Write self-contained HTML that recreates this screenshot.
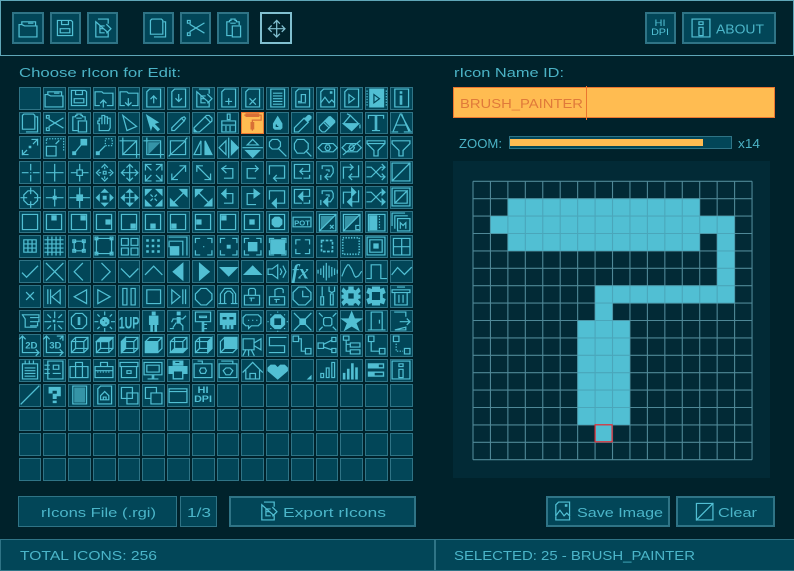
<!DOCTYPE html>
<html><head><meta charset="utf-8"><title>rIconPacker</title>
<style>
html,body{margin:0;padding:0;background:#00222b}
body{position:relative;width:794px;height:570px;overflow:hidden;font-family:"Liberation Sans",sans-serif}
div,b,a{position:absolute;box-sizing:border-box;display:block}
svg{color:#51bfd3;stroke:currentColor;fill:none;stroke-width:.9;stroke-linecap:square;stroke-linejoin:miter;overflow:visible}
svg.i{position:absolute;width:22px;height:22px}
.f{fill:currentColor}
.d{stroke:#024658;fill:#024658}
.t{stroke-linecap:butt;stroke-dasharray:1 1}
.o{fill:currentColor;stroke:none;opacity:.65}
svg text{fill:currentColor;stroke:none}
#g{left:18.5px;top:86.75px;display:grid;grid-template-columns:repeat(16,22.75px);grid-auto-rows:22.75px;gap:2px}
#g b{position:relative;background:#024658;border:1.4px solid #2f7486}
#g b svg.i{left:-1px;top:-1px}
#g b.s{background:#ffbc51;border-color:#eb7630}
#g b.s svg.i{color:#d86f36;width:20px;height:20px;left:1px;top:-1px;stroke-width:1}
.btn{background:#024658;border:2.4px solid #2f7486;top:12.3px;width:31.4px;height:31.4px}
.btn svg.i{left:2.3px;top:2.3px}
.box{background:#024658;border:1.4px solid #2f7486}
</style></head><body>

<div style="left:0;top:0;width:794px;height:55.5px;border:1.5px solid #5fa7b8;background:#00222b"></div>

<div class="btn" style="left:12.3px"><svg class="i" viewBox="-.5 -.5 16 16"><path d="M1 14V5H3V3H13V6M1 14H14V6H5L3 5M8 4H11"/></svg></div>
<div class="btn" style="left:49.6px"><svg class="i" viewBox="-.5 -.5 16 16"><path d="M2 2H12L13 3V13H2ZM5 2V5H10V2M4 8H11V11H4Z"/></svg></div>
<div class="btn" style="left:87px"><svg class="i" viewBox="-.5 -.5 16 16"><path d="M5 1H12V4M12 11V14H3V3ZM6 6H9M6 6V11H9M6 8H8M11 5L14 8L11 11"/></svg></div>
<div class="btn" style="left:142.7px"><svg class="i" viewBox="-.5 -.5 16 16"><path d="M3 1H10L11 2V12H2V2ZM12 3H13V14H5"/></svg></div>
<div class="btn" style="left:180px"><svg class="i" viewBox="-.5 -.5 16 16"><path d="M2 2H4V4H2ZM2 11H4V13H2ZM4 5L9 8L14 11M4 10L9 7L14 4"/></svg></div>
<div class="btn" style="left:217.3px"><svg class="i" viewBox="-.5 -.5 16 16"><path d="M3 3H5V2H6V1H9V2H10V3H12V5M3 3V13H6M7 6H13V14H7ZM6 4H9"/></svg></div>
<div class="btn" style="left:260.3px;background:#00222b;border-color:#81c0d0"><svg class="i" style="color:#81c0d0" viewBox="-.5 -.5 16 16"><path d="M8 2V14M2 8H14M6 4L8 2L10 4M6 12L8 14L10 12M4 6L2 8L4 10M12 6L14 8L12 10"/></svg></div>
<div class="btn" style="left:645px"><svg class="i" viewBox="-.5 -.5 16 16"><text x="3.5" y="6" font-size="6.8" textLength="8" lengthAdjust="spacingAndGlyphs" font-family="Liberation Sans">HI</text><text x="1" y="12.5" font-size="6.8" textLength="13" lengthAdjust="spacingAndGlyphs" font-family="Liberation Sans">DPI</text></svg></div>
<div class="btn" style="left:682.3px;width:93.4px"><svg class="i" style="left:6px" viewBox="-.5 -.5 16 16"><path d="M1 1H14V14H1ZM6 3H9V5H6ZM6 7H9V13H6Z"/></svg></div>

<div id="g">
<b></b>
<b><svg class="i" viewBox="-.5 -.5 16 16"><path d="M1 14V5H3V3H13V6M1 14H14V6H5L3 5M8 4H11"/></svg></b>
<b><svg class="i" viewBox="-.5 -.5 16 16"><path d="M2 2H12L13 3V13H2ZM5 2V5H10V2M4 8H11V11H4Z"/></svg></b>
<b><svg class="i" viewBox="-.5 -.5 16 16"><path d="M1 13V3H6L7 4H14V13H10M1 13H4M7 14V9M5 11L7 9L9 11"/></svg></b>
<b><svg class="i" viewBox="-.5 -.5 16 16"><path d="M1 13V3H6L7 4H14V13H10M1 13H4M7 8V13M5 11L7 13L9 11"/></svg></b>
<b><svg class="i" viewBox="-.5 -.5 16 16"><path d="M5 1H13V14H3V3ZM8 11V6M6 8L8 6L10 8"/></svg></b>
<b><svg class="i" viewBox="-.5 -.5 16 16"><path d="M5 1H13V14H3V3ZM8 5V10M6 8L8 10L10 8"/></svg></b>
<b><svg class="i" viewBox="-.5 -.5 16 16"><path d="M5 1H12V4M12 11V14H3V3ZM6 6H9M6 6V11H9M6 8H8M11 5L14 8L11 11"/></svg></b>
<b><svg class="i" viewBox="-.5 -.5 16 16"><path d="M5 1H13V14H3V3ZM8 8V12M6 10H10"/></svg></b>
<b><svg class="i" viewBox="-.5 -.5 16 16"><path d="M5 1H13V14H3V3ZM6 8L10 12M10 8L6 12"/></svg></b>
<b><svg class="i" viewBox="-.5 -.5 16 16"><path d="M3 1H13V14H3ZM5 4H11M5 6H11M5 8H11M5 10H11M5 12H11"/></svg></b>
<b><svg class="i" viewBox="-.5 -.5 16 16"><path d="M5 1H13V14H3V3ZM5 11H7V5H10V10M8 11H10M5 10H6"/></svg></b>
<b><svg class="i" viewBox="-.5 -.5 16 16"><path d="M5 1H13V14H3V3ZM10 3H11V4H10ZM3 11L6 7L9 11L11 9L13 11"/></svg></b>
<b><svg class="i" viewBox="-.5 -.5 16 16"><path d="M5 1H13V14H3V3ZM6 5V11L10 8Z"/></svg></b>
<b><svg class="i" viewBox="-.5 -.5 16 16"><path class="f" d="M3 1H13V14H3Z"/><path class="d" style="fill:none" d="M6 5V11L10 8Z"/><path d="M1 2V14M15 2V14" class="t"/></svg></b>
<b><svg class="i" viewBox="-.5 -.5 16 16"><path d="M3 1H13V14H3ZM7 3H8V4H7ZM7 6H8V12H7Z"/></svg></b>

<b><svg class="i" viewBox="-.5 -.5 16 16"><path d="M3 1H10L11 2V12H2V2ZM12 3H13V14H5"/></svg></b>
<b><svg class="i" viewBox="-.5 -.5 16 16"><path d="M2 2H4V4H2ZM2 11H4V13H2ZM4 5L9 8L14 11M4 10L9 7L14 4"/></svg></b>
<b><svg class="i" viewBox="-.5 -.5 16 16"><path d="M3 3H5V2H6V1H9V2H10V3H12V5M3 3V13H6M7 6H13V14H7ZM6 4H9"/></svg></b>
<b><svg class="i" viewBox="-.5 -.5 16 16"><path d="M4 13V8H3V6H4V4H6V2H8V3H10V4H12V11L11 13ZM6 4V8M8 3V8M10 4V8"/></svg></b>
<b><svg class="i" viewBox="-.5 -.5 16 16"><path d="M3 2L13 10L6 13Z"/></svg></b>
<b><svg class="i" viewBox="-.5 -.5 16 16"><path class="f" d="M3 2L11 7L8 8L12 12L11 13L7 9L6 12Z"/></svg></b>
<b><svg class="i" viewBox="-.5 -.5 16 16"><path d="M3 13V11L10 4L12 3L13 4L12 6L5 13ZM10 4L12 6"/></svg></b>
<b><svg class="i" viewBox="-.5 -.5 16 16"><path d="M1 14V11L10 2H12L14 4V6L5 14ZM9 3L13 7"/><path class="f" d="M1 14V12L3 14Z"/></svg></b>
<b><svg class="i" viewBox="-.5 -.5 16 16"><path d="M7 1H9V5H7ZM3 6H13V14H3ZM3 9H13M6 10V13M9 10V13"/></svg></b>
<b class="s"><svg class="i" viewBox="-.5 -.5 16 16"><path d="M2 1H12M1 2H14M2 3H12M14 3V6M7 6H14M7 7V14M6 8V13M8 8V13"/></svg></b>
<b><svg class="i" viewBox="-.5 -.5 16 16"><path class="f" d="M8 3L11 8V11L10 12H6L5 11V8Z"/><path class="d" d="M7 9V10H8"/></svg></b>
<b><svg class="i" viewBox="-.5 -.5 16 16"><path d="M2 14V11L9 4L12 7L5 14Z"/><path class="f" d="M10 4L12 2H13L14 3V4L12 6Z"/></svg></b>
<b><svg class="i" viewBox="-.5 -.5 16 16"><path d="M2 10L9 3H10L13 6V7L6 14H4L2 12ZM5 7L9 11"/><path class="f" d="M6 6L9 3H10L13 6V7L10 10Z"/></svg></b>
<b><svg class="i" viewBox="-.5 -.5 16 16"><path d="M7 2L13 8L8 13L2 8ZM7 2L5 1M14 9V11"/><path class="f" d="M2 8H13L8 13Z"/></svg></b>
<b><svg class="i" viewBox="-.5 -.5 16 16"><path d="M2 2H13V4M2 2V4M7 2V13M8 2V13M5 13H10"/></svg></b>
<b><svg class="i" viewBox="-.5 -.5 16 16"><path d="M7 1L2 13M7 1H8L13 13M8 2L14 13M1 14H5M10 14H15M4 9H11"/></svg></b>

<b><svg class="i" viewBox="-.5 -.5 16 16"><path d="M9 2H13V6M13 2L10 5M2 13V10M2 13H6M2 13L5 10"/><path class="f" d="M7 7H8V8H7Z"/></svg></b>
<b><svg class="i" viewBox="-.5 -.5 16 16"><path class="t" d="M2 1.5H14.5V11M2 2V6"/><path d="M2 7H9V14H2ZM9 5L11 3"/></svg></b>
<b><svg class="i" viewBox="-.5 -.5 16 16"><path class="f" d="M9 2H13V6H9ZM3 11H5V13H3Z"/><path d="M5 11L9 6"/></svg></b>
<b><svg class="i" viewBox="-.5 -.5 16 16"><path class="t" d="M8.5 1.5H13.5V6.5H8.5Z"/><path class="f" d="M2 11H4V13H2Z"/><path d="M4 11L8 7"/></svg></b>
<b><svg class="i" viewBox="-.5 -.5 16 16"><path d="M3 1V13H15M1 3H13V15M3 13L13 3"/></svg></b>
<b><svg class="i" viewBox="-.5 -.5 16 16"><path d="M3 1V13H15M1 3H13V15"/><path class="o" d="M4 4H13L4 13Z"/></svg></b>
<b><svg class="i" viewBox="-.5 -.5 16 16"><path d="M2 3H13V13H2ZM2 13L13 3M13 2L14 1M1 14L2 13"/></svg></b>
<b><svg class="i" viewBox="-.5 -.5 16 16"><path d="M1 13L6 3V13Z"/><path class="f" d="M9 3L14 13H9Z"/></svg></b>
<b><svg class="i" viewBox="-.5 -.5 16 16"><path d="M6 3L1 8L6 13ZM8 1V15"/><path class="f" d="M10 3L15 8L10 13Z"/></svg></b>
<b><svg class="i" viewBox="-.5 -.5 16 16"><path d="M4 6L8 2L12 6ZM1 8H15"/><path class="f" d="M3 10H13L8 15Z"/></svg></b>
<b><svg class="i" viewBox="-.5 -.5 16 16"><path d="M4 2H8L10 4V7L8 9H4L2 7V4ZM9 9L14 14"/></svg></b>
<b><svg class="i" viewBox="-.5 -.5 16 16"><path d="M4 2H9L12 5V9L9 12H4L2 9V5ZM11 11L14 14"/></svg></b>
<b><svg class="i" viewBox="-.5 -.5 16 16"><path d="M1 8L4 5H12L15 8L12 11H4ZM7 6H9L10 8L9 10H7L6 8ZM8 8h0"/></svg></b>
<b><svg class="i" viewBox="-.5 -.5 16 16"><path d="M1 8L4 5H12L15 8L12 11H4ZM7 6H9L10 8L9 10H7L6 8ZM2 13L14 3"/></svg></b>
<b><svg class="i" viewBox="-.5 -.5 16 16"><path d="M1 3H14V5L9 10V14H6V10L1 5ZM1 5H14"/></svg></b>
<b><svg class="i" viewBox="-.5 -.5 16 16"><path d="M1 3H14V5L9 10V14H6V10L1 5Z"/></svg></b>

<b><svg class="i" viewBox="-.5 -.5 16 16"><path d="M8 2V6M8 10V14M2 8H6M10 8H14M8 8h0"/></svg></b>
<b><svg class="i" viewBox="-.5 -.5 16 16"><path d="M8 2V14M2 8H14"/></svg></b>
<b><svg class="i" viewBox="-.5 -.5 16 16"><path d="M8 2V6M8 10V14M2 8H6M10 8H14M6 6H10V10H6Z"/></svg></b>
<b><svg class="i" viewBox="-.5 -.5 16 16"><path d="M7 7H9V9H7ZM6 4L8 2L10 4M6 12L8 14L10 12M4 6L2 8L4 10M12 6L14 8L12 10M8 4V5M8 11V12M4 8H5M11 8H12"/></svg></b>
<b><svg class="i" viewBox="-.5 -.5 16 16"><path d="M8 2V14M2 8H14M6 4L8 2L10 4M6 12L8 14L10 12M4 6L2 8L4 10M12 6L14 8L12 10"/></svg></b>
<b><svg class="i" viewBox="-.5 -.5 16 16"><path d="M2 2H6M2 2V6M2 2L6 6M14 2H10M14 2V6M14 2L10 6M2 14H6M2 14V10M2 14L6 10M14 14H10M14 14V10M14 14L10 10"/></svg></b>
<b><svg class="i" viewBox="-.5 -.5 16 16"><path d="M3 13L13 3M9 3H13V7M3 9V13H7"/></svg></b>
<b><svg class="i" viewBox="-.5 -.5 16 16"><path d="M3 3L13 13M3 7V3H7M13 9V13H9"/></svg></b>
<b><svg class="i" viewBox="-.5 -.5 16 16"><path d="M6 3L3 5L6 8M3 5H11V12H5"/></svg></b>
<b><svg class="i" viewBox="-.5 -.5 16 16"><path d="M4 12V5H12M10 3L12 5L10 7M4 12H10"/></svg></b>
<b><svg class="i" viewBox="-.5 -.5 16 16"><path d="M2 3H13V12H5M7 10L5 12L7 14M2 3V9"/></svg></b>
<b><svg class="i" viewBox="-.5 -.5 16 16"><path d="M2 2H13V7H6M8 5L6 7L8 9M2 2V12H7M13 10V12H9"/></svg></b>
<b><svg class="i" viewBox="-.5 -.5 16 16"><path d="M4 3H11L12 5V8L10 11H6M8 9L6 11L8 13M4 3V5M7 6H9V7M3 10V13"/></svg></b>
<b><svg class="i" viewBox="-.5 -.5 16 16"><path d="M2 12V4H9M7 2L9 4L7 6M13 3V11H6M8 9L6 11L8 13"/></svg></b>
<b><svg class="i" viewBox="-.5 -.5 16 16"><path d="M1 4H4L11 11H14M1 11H4L11 4H14M12 2L14 4L12 6M12 9L14 11L12 13"/></svg></b>
<b><svg class="i" viewBox="-.5 -.5 16 16"><path d="M1 1H14V14H1ZM1 14L14 1"/></svg></b>

<b><svg class="i" viewBox="-.5 -.5 16 16"><path d="M6 3H10L13 6V10L10 13H6L3 10V6ZM8 1V5M8 11V15M1 8H5M11 8H15"/></svg></b>
<b><svg class="i" viewBox="-.5 -.5 16 16"><path d="M8 2V14M2 8H14"/><path class="f" d="M7 7H9V9H7Z"/></svg></b>
<b><svg class="i" viewBox="-.5 -.5 16 16"><path d="M8 1V15M1 8H15"/><path class="f" d="M6 6H10V10H6Z"/></svg></b>
<b><svg class="i" viewBox="-.5 -.5 16 16"><path class="f" d="M7 7H9V9H7ZM8 2L10 4H6ZM8 14L10 12H6ZM2 8L4 6V10ZM14 8L12 6V10Z"/></svg></b>
<b><svg class="i" viewBox="-.5 -.5 16 16"><path d="M8 2V14M2 8H14"/><path class="f" d="M8 2L10 4H6ZM8 14L10 12H6ZM2 8L4 6V10ZM14 8L12 6V10Z"/></svg></b>
<b><svg class="i" viewBox="-.5 -.5 16 16"><path class="f" d="M2 2H6L2 6ZM14 2H10L14 6ZM2 14H6L2 10ZM14 14H10L14 10Z"/><path d="M6 6L7 7M10 6L9 7M6 10L7 9M10 10L9 9"/></svg></b>
<b><svg class="i" viewBox="-.5 -.5 16 16"><path d="M3 13L13 3"/><path class="f" d="M9 2H14V7ZM2 9V14H7Z"/></svg></b>
<b><svg class="i" viewBox="-.5 -.5 16 16"><path d="M3 3L13 13"/><path class="f" d="M2 7V2H7ZM14 9V14H9Z"/></svg></b>
<b><svg class="i" viewBox="-.5 -.5 16 16"><path d="M3 5H11V12H5"/><path class="f" d="M6 2V8L3 5Z"/></svg></b>
<b><svg class="i" viewBox="-.5 -.5 16 16"><path d="M12 5H4V13H10"/><path class="f" d="M9 2V8L13 5Z"/></svg></b>
<b><svg class="i" viewBox="-.5 -.5 16 16"><path d="M2 9V3H13V12H5"/><path class="f" d="M7 9V15L4 12Z"/></svg></b>
<b><svg class="i" viewBox="-.5 -.5 16 16"><path d="M2 2H13V7H6M2 2V12H7M13 10V12H9"/><path class="f" d="M8 4V10L5 7Z"/></svg></b>
<b><svg class="i" viewBox="-.5 -.5 16 16"><path d="M4 3H11L12 5V8L10 11H6M4 3V5M7 6H9V7M3 10V13"/><path class="f" d="M8 8V14L5 11Z"/></svg></b>
<b><svg class="i" viewBox="-.5 -.5 16 16"><path d="M2 12V4H9M13 3V11H6"/><path class="f" d="M8 1V7L11 4ZM8 8V14L5 11Z"/></svg></b>
<b><svg class="i" viewBox="-.5 -.5 16 16"><path d="M1 4H4L11 11H14M1 11H4L11 4H14"/><path class="f" d="M12 2L14 4L12 6ZM12 9L14 11L12 13Z"/></svg></b>
<b><svg class="i" viewBox="-.5 -.5 16 16"><path d="M1 1H14V14H1ZM3 3H12V12H3ZM3 12L12 3"/></svg></b>

<b><svg class="i" viewBox="-.5 -.5 16 16"><path d="M2 2H13V13H2Z"/></svg></b>
<b><svg class="i" viewBox="-.5 -.5 16 16"><path d="M2 2H13V13H2Z"/><path class="f" d="M6 3H9V6H6Z"/></svg></b>
<b><svg class="i" viewBox="-.5 -.5 16 16"><path d="M2 2H13V13H2Z"/><path class="f" d="M9 3H12V6H9Z"/></svg></b>
<b><svg class="i" viewBox="-.5 -.5 16 16"><path d="M2 2H13V13H2Z"/><path class="f" d="M9 6H12V9H9Z"/></svg></b>
<b><svg class="i" viewBox="-.5 -.5 16 16"><path d="M2 2H13V13H2Z"/><path class="f" d="M9 9H12V12H9Z"/></svg></b>
<b><svg class="i" viewBox="-.5 -.5 16 16"><path d="M2 2H13V13H2Z"/><path class="f" d="M6 9H9V12H6Z"/></svg></b>
<b><svg class="i" viewBox="-.5 -.5 16 16"><path d="M2 2H13V13H2Z"/><path class="f" d="M3 9H6V12H3Z"/></svg></b>
<b><svg class="i" viewBox="-.5 -.5 16 16"><path d="M2 2H13V13H2Z"/><path class="f" d="M3 6H6V9H3Z"/></svg></b>
<b><svg class="i" viewBox="-.5 -.5 16 16"><path d="M2 2H13V13H2Z"/><path class="f" d="M3 3H6V6H3Z"/></svg></b>
<b><svg class="i" viewBox="-.5 -.5 16 16"><path d="M2 2H13V13H2Z"/><path class="f" d="M6 6H9V9H6Z"/></svg></b>
<b><svg class="i" viewBox="-.5 -.5 16 16"><path d="M2 2H13V13H2Z"/><path class="f" d="M6 4H9L11 6V9L9 11H6L4 9V6Z"/></svg></b>
<b><svg class="i" viewBox="-.5 -.5 16 16"><path d="M1 4H14V11H1Z"/><text x="7.5" y="10" font-size="5.6" text-anchor="middle" font-family="Liberation Sans" font-weight="700">POT</text></svg></b>
<b><svg class="i" viewBox="-.5 -.5 16 16"><path d="M2 2H14V14H2ZM2 14L14 2M10 10L12 12M12 10L10 12"/><path class="o" d="M3 3H13L3 13Z"/></svg></b>
<b><svg class="i" viewBox="-.5 -.5 16 16"><path d="M2 2H14V14H2ZM2 14L14 2M13 10H11V13H13"/><path class="o" d="M3 3H13L3 13Z"/></svg></b>
<b><svg class="i" viewBox="-.5 -.5 16 16"><path d="M2 2H14V14H2Z"/><path class="f" d="M3 3H8V13H3Z"/><path class="t" d="M10 3V13"/></svg></b>
<b><svg class="i" viewBox="-.5 -.5 16 16"><path d="M1 1H10M1 1V10M3 3H12M3 3V12M5 5H14V14H5ZM7 12V8L9 10L11 8V12"/></svg></b>

<b><svg class="i" viewBox="-.5 -.5 16 16"><path d="M3 3H12V12H3ZM6 3V12M9 3V12M3 6H12M3 9H12"/></svg></b>
<b><svg class="i" viewBox="-.5 -.5 16 16"><path d="M3 1V14M6 1V14M9 1V14M12 1V14M1 3H14M1 6H14M1 9H14M1 12H14"/></svg></b>
<b><svg class="i" viewBox="-.5 -.5 16 16"><path d="M4 4H11V11H4ZM3 3H5V5H3ZM10 3H12V5H10ZM3 10H5V12H3ZM10 10H12V12H10Z"/></svg></b>
<b><svg class="i" viewBox="-.5 -.5 16 16"><path d="M2 2H13V13H2ZM1 1H3V3H1ZM12 1H14V3H12ZM1 12H3V14H1ZM12 12H14V14H12Z"/></svg></b>
<b><svg class="i" viewBox="-.5 -.5 16 16"><path d="M2 2H7V7H2ZM9 2H14V7H9ZM2 9H7V14H2ZM9 9H14V14H9Z"/></svg></b>
<b><svg class="i" viewBox="-.5 -.5 16 16"><path class="f" d="M3 3H4V4H3ZM7 3H8V4H7ZM11 3H12V4H11ZM3 7H4V8H3ZM7 7H8V8H7ZM11 7H12V8H11ZM3 11H4V12H3ZM7 11H8V12H7ZM11 11H12V12H11Z"/></svg></b>
<b><svg class="i" viewBox="-.5 -.5 16 16"><path d="M1 1H14V14M1 4H11V14"/><path class="f" d="M2 8H8V14H2Z"/><path d="M1 5V8"/></svg></b>
<b><svg class="i" viewBox="-.5 -.5 16 16"><path d="M2 5V2H5M11 2H14V5M14 11V14H11M5 14H2V11M8 8h0"/></svg></b>
<b><svg class="i" viewBox="-.5 -.5 16 16"><path d="M2 5V2H5M11 2H14V5M14 11V14H11M5 14H2V11"/><path class="f" d="M7 7H9V9H7Z"/></svg></b>
<b><svg class="i" viewBox="-.5 -.5 16 16"><path d="M2 5V2H5M11 2H14V5M14 11V14H11M5 14H2V11"/><path class="f" d="M5 5H11V11H5Z"/></svg></b>
<b><svg class="i" viewBox="-.5 -.5 16 16"><path d="M2 5V2H5M11 2H14V5M14 11V14H11M5 14H2V11"/><path class="f" d="M3 3H13V13H3Z"/></svg></b>
<b><svg class="i" viewBox="-.5 -.5 16 16"><path d="M3 6V3H6M10 3H13V6M13 10V13H10M6 13H3V10"/></svg></b>
<b><svg class="i" viewBox="-.5 -.5 16 16"><path class="t" style="stroke-width:1.2;stroke-dasharray:2 1" d="M3.5 3.5H11.5V11.5H3.5Z"/></svg></b>
<b><svg class="i" viewBox="-.5 -.5 16 16"><path class="t" style="stroke-width:1.2" d="M1.5 1.5H13.5V13.5H1.5Z"/></svg></b>
<b><svg class="i" viewBox="-.5 -.5 16 16"><path d="M1 1H14V14H1ZM3 3H12V12H3Z"/><path class="f" d="M6 6H9V9H6Z"/></svg></b>
<b><svg class="i" viewBox="-.5 -.5 16 16"><path d="M2 2H14V14H2ZM8 2V14M2 8H14"/></svg></b>

<b><svg class="i" viewBox="-.5 -.5 16 16"><path d="M2 9L5 12L13 4"/></svg></b>
<b><svg class="i" viewBox="-.5 -.5 16 16"><path d="M2 2L14 14M14 2L2 14"/></svg></b>
<b><svg class="i" viewBox="-.5 -.5 16 16"><path d="M10 2L4 8L10 14"/></svg></b>
<b><svg class="i" viewBox="-.5 -.5 16 16"><path d="M6 2L12 8L6 14"/></svg></b>
<b><svg class="i" viewBox="-.5 -.5 16 16"><path d="M2 6L8 12L14 6"/></svg></b>
<b><svg class="i" viewBox="-.5 -.5 16 16"><path d="M2 10L8 4L14 10"/></svg></b>
<b><svg class="i" viewBox="-.5 -.5 16 16"><path class="f" d="M11 2V14L4 8Z"/></svg></b>
<b><svg class="i" viewBox="-.5 -.5 16 16"><path class="f" d="M5 2V14L12 8Z"/></svg></b>
<b><svg class="i" viewBox="-.5 -.5 16 16"><path class="f" d="M2 5H14L8 11Z"/></svg></b>
<b><svg class="i" viewBox="-.5 -.5 16 16"><path class="f" d="M2 10H14L8 4Z"/></svg></b>
<b><svg class="i" viewBox="-.5 -.5 16 16"><path d="M1 6H4L8 3V13L4 10H1ZM10 6L11 8L10 10M12 4L14 8L12 12"/></svg></b>
<b><svg class="i" viewBox="-.5 -.5 16 16"><text x="0" y="13" font-size="15" font-style="italic" font-family="Liberation Serif">fx</text></svg></b>
<b><svg class="i" viewBox="-.5 -.5 16 16"><path d="M1 7V9M3 6V10M5 4V12M7 2V14M9 4V12M11 5V11M13 6V10M15 7V9"/></svg></b>
<b><svg class="i" viewBox="-.5 -.5 16 16"><path d="M1 11L3 6L5 3H6L8 6L10 11L11 12L13 11L15 8"/></svg></b>
<b><svg class="i" viewBox="-.5 -.5 16 16"><path d="M1 13H4V3H11V13H15"/></svg></b>
<b><svg class="i" viewBox="-.5 -.5 16 16"><path d="M1 10L5 5L10 10L15 5"/></svg></b>

<b><svg class="i" viewBox="-.5 -.5 16 16"><path d="M5 5L10 10M10 5L5 10"/></svg></b>
<b><svg class="i" viewBox="-.5 -.5 16 16"><path d="M3 3V13M5 3V13M12 3L6 8L12 13Z"/></svg></b>
<b><svg class="i" viewBox="-.5 -.5 16 16"><path d="M13 3V13L4 8Z"/></svg></b>
<b><svg class="i" viewBox="-.5 -.5 16 16"><path d="M3 3V13L12 8Z"/></svg></b>
<b><svg class="i" viewBox="-.5 -.5 16 16"><path d="M3 2H6V14H3ZM9 2H12V14H9Z"/></svg></b>
<b><svg class="i" viewBox="-.5 -.5 16 16"><path d="M3 3H13V13H3Z"/></svg></b>
<b><svg class="i" viewBox="-.5 -.5 16 16"><path d="M3 3V13L9 8ZM11 3V13M13 3V13"/></svg></b>
<b><svg class="i" viewBox="-.5 -.5 16 16"><path d="M6 2H10L14 6V10L10 14H6L2 10V6Z"/></svg></b>
<b><svg class="i" viewBox="-.5 -.5 16 16"><path d="M2 13V6L5 2H10L13 6V13M5 13V6L7 4H9L11 6V13M1 13H6M10 13H14"/></svg></b>
<b><svg class="i" viewBox="-.5 -.5 16 16"><path d="M2 7H13V14H2ZM5 7V3L6 2H9L10 3V7M7 9V11M6 9H9"/></svg></b>
<b><svg class="i" viewBox="-.5 -.5 16 16"><path d="M2 8H13V14H2ZM6 8V3L8 2H11L12 3V5M7 10V12M6 10H9"/></svg></b>
<b><svg class="i" viewBox="-.5 -.5 16 16"><path d="M5 1H10L14 5V10L10 14H5L1 10V5ZM8 4V8H12"/></svg></b>
<b><svg class="i" viewBox="-.5 -.5 16 16"><path d="M4 1V7M3 8H5V14H3ZM9 1V4L11 5L13 4V1M10 6H12V14H10Z"/></svg></b>
<b><svg class="i" viewBox="-.5 -.5 16 16"><path class="f" d="M6 1H9V3L11 4L13 2L14 4L12 6L13 7H14V9H13L12 10L14 12L13 14L11 12L9 13V14H6V13L4 12L2 14L1 12L3 10L2 9H1V7H2L3 6L1 4L2 2L4 4L6 3Z"/><path class="d" d="M6 6H9V9H6Z"/></svg></b>
<b><svg class="i" viewBox="-.5 -.5 16 16"><path class="f" d="M5 1H10V3L13 2L14 5L12 6V9L14 10L13 13L10 12V14H5V12L2 13L1 10L3 9V6L1 5L2 2L5 3Z"/><path class="d" d="M5 5H10V10H5Z"/></svg></b>
<b><svg class="i" viewBox="-.5 -.5 16 16"><path d="M1 3H14V5H1ZM3 5V14H12V5M5 1H10M6 7V12M9 7V12"/></svg></b>

<b><svg class="i" viewBox="-.5 -.5 16 16"><path d="M2 3H14V5H8M14 6V8H8M13 9V11H8M12 12H4V6L2 3"/></svg></b>
<b><svg class="i" viewBox="-.5 -.5 16 16"><path d="M8 1V5M8 10V14M1 8H5M10 8H14M3 3L5 5M11 5L13 3M3 13L5 11M11 11L13 13"/><path class="f" d="M7 7H8V8H7Z"/></svg></b>
<b><svg class="i" viewBox="-.5 -.5 16 16"><path d="M5 2H10L13 5V10L10 13H5L2 10V5ZM7 5H8V10H7Z"/></svg></b>
<b><svg class="i" viewBox="-.5 -.5 16 16"><path class="f" d="M7 5H9L11 7V9L9 11H7L5 9V7Z"/><path d="M8 1V3M8 13V15M1 8H3M13 8H15M3 3L4 4M13 3L12 4M3 13L4 12M13 13L12 12"/><path class="d" d="M7 7h0M9 9h0"/></svg></b>
<b><svg class="i" viewBox="-.5 -.5 16 16"><text x="0" y="13" font-size="12" textLength="15" lengthAdjust="spacingAndGlyphs" font-family="Liberation Sans">1UP</text></svg></b>
<b><svg class="i" viewBox="-.5 -.5 16 16"><path class="f" d="M7 1H9V3H7ZM5 4H11V10H10V15H9V10H7V15H6V10H5Z"/></svg></b>
<b><svg class="i" viewBox="-.5 -.5 16 16"><path class="f" d="M7 1H9V3H7ZM7 5H9V9H7Z"/><path d="M4 6H11M6 9L4 12M2 13H4M9 9L11 11V14M11 6L13 4M4 6L3 8"/></svg></b>
<b><svg class="i" viewBox="-.5 -.5 16 16"><path d="M2 1H13V8H2ZM5 4H10V5H5ZM7 8V15M8 8V15M8 10H10M8 13H10"/></svg></b>
<b><svg class="i" viewBox="-.5 -.5 16 16"><path class="f" d="M2 2H13V10H11V13H4V10H2Z"/><path class="d" d="M4 5H6V6H4ZM9 5H11V6H9ZM6 11V13M9 11V13"/></svg></b>
<b><svg class="i" viewBox="-.5 -.5 16 16"><path d="M3 3H12L14 5V9L12 11H7L5 13V11H3L1 9V5ZM5 7h0M8 7h0M11 7h0"/></svg></b>
<b><svg class="i" viewBox="-.5 -.5 16 16"><path class="f" d="M6 3H10L13 6V10L10 13H6L3 10V6Z"/><path class="d" d="M6 6H10V10H6Z"/><path d="M8 1h0M8 15h0M1 8h0M15 8h0M3 3h0M13 3h0M3 13h0M13 13h0"/></svg></b>
<b><svg class="i" viewBox="-.5 -.5 16 16"><path d="M2 2L6 6M14 2L10 6M2 14L6 10M14 14L10 10"/><path class="f" d="M6 6H10V10H6Z"/></svg></b>
<b><svg class="i" viewBox="-.5 -.5 16 16"><path d="M2 2L4 4M14 2L12 4M2 14L4 12M14 14L12 12M6 5H10L11 6V10L10 11H6L5 10V6Z"/></svg></b>
<b><svg class="i" viewBox="-.5 -.5 16 16"><path class="f" d="M8 1L10 6H15L11 9L13 14L8 11L3 14L5 9L1 6H6Z"/></svg></b>
<b><svg class="i" viewBox="-.5 -.5 16 16"><path d="M4 1H12V14H4ZM10 7V9M2 14H4M12 14H14"/></svg></b>
<b><svg class="i" viewBox="-.5 -.5 16 16"><path d="M3 1H11V4M11 12V14H3ZM7 8H14M12 6L14 8L12 10"/></svg></b>

<b><svg class="i" viewBox="-.5 -.5 16 16"><path d="M2 1V13H14M0 3L2 1L4 3M12 11L14 13L12 15"/><text x="4" y="10" font-size="7" font-family="Liberation Sans">2D</text></svg></b>
<b><svg class="i" viewBox="-.5 -.5 16 16"><path d="M2 1V13H14M0 3L2 1L4 3M12 11L14 13L12 15M10 1H14V4M14 1L12 3"/><text x="4" y="10" font-size="7" font-family="Liberation Sans">3D</text></svg></b>
<b><svg class="i" viewBox="-.5 -.5 16 16"><path d="M2 5L5 2H14V10L11 13H2ZM2 5H11V13M11 5L14 2M5 2V10H14M2 13L5 10"/></svg></b>
<b><svg class="i" viewBox="-.5 -.5 16 16"><path d="M2 5L5 2H14V10L11 13H2ZM2 5H11V13M5 2V10H14M2 13L5 10"/><path class="f" d="M2 5L5 2H14L11 5Z"/></svg></b>
<b><svg class="i" viewBox="-.5 -.5 16 16"><path d="M2 5L5 2H14V10L11 13H2ZM2 5H11V13M11 5L14 2M5 10H14"/><path class="f" d="M2 5L5 2V10L2 13Z"/></svg></b>
<b><svg class="i" viewBox="-.5 -.5 16 16"><path d="M2 5L5 2H14V10L11 13H2ZM11 5L14 2"/><path class="f" d="M2 5H11V13H2Z"/></svg></b>
<b><svg class="i" viewBox="-.5 -.5 16 16"><path d="M2 5L5 2H14V10L11 13H2ZM2 5H11V13M11 5L14 2M5 2V10"/><path class="f" d="M2 13L5 10H14L11 13Z"/></svg></b>
<b><svg class="i" viewBox="-.5 -.5 16 16"><path d="M2 5L5 2H14V10L11 13H2ZM2 5H11V13M5 2V10H11M2 13L5 10"/><path class="f" d="M11 5L14 2V10L11 13Z"/></svg></b>
<b><svg class="i" viewBox="-.5 -.5 16 16"><path d="M2 5L5 2H14V10L11 13H2ZM2 5V13M11 13L14 10M2 13L5 10"/><path class="f" d="M5 2H14V10H5Z"/></svg></b>
<b><svg class="i" viewBox="-.5 -.5 16 16"><path d="M1 3H9V11H1ZM9 6L14 3V11L9 8ZM3 11L1 15M7 11L9 15M5 11V15"/></svg></b>
<b><svg class="i" viewBox="-.5 -.5 16 16"><path d="M14 2H2V8H13V13H2"/></svg></b>
<b><svg class="i" viewBox="-.5 -.5 16 16"><path d="M1 1H5V5H1ZM10 10H14V14H10ZM5 3H7V12H10"/></svg></b>
<b><svg class="i" viewBox="-.5 -.5 16 16"><path d="M1 6H5V10H1ZM11 2H14V5H11ZM11 10H14V13H11ZM5 7L11 4M5 9L11 11"/></svg></b>
<b><svg class="i" viewBox="-.5 -.5 16 16"><path d="M2 1H6V4H2ZM7 6H14V9H7ZM7 11H14V14H7ZM4 4V12H7M4 7H7"/></svg></b>
<b><svg class="i" viewBox="-.5 -.5 16 16"><path d="M2 1H6V5H2ZM10 10H14V14H10ZM4 5V12H10"/></svg></b>
<b><svg class="i" viewBox="-.5 -.5 16 16"><path d="M2 1H6V5H2ZM10 10H14V14H10Z"/><path class="t" d="M4 6.5V12H9"/></svg></b>

<b><svg class="i" viewBox="-.5 -.5 16 16"><path d="M2 3H13V14H2ZM4 1V3M7 1V3M10 1V3M4 6H11M4 8H11M4 10H11M4 12H11"/></svg></b>
<b><svg class="i" viewBox="-.5 -.5 16 16"><path d="M3 1H14V14H3ZM1 4H4M1 7H4M1 10H4M7 4H11V7H7ZM7 10H12"/></svg></b>
<b><svg class="i" viewBox="-.5 -.5 16 16"><path d="M1 5H14V13H1ZM5 5V2H10V5M5 5V13M10 5V13"/></svg></b>
<b><svg class="i" viewBox="-.5 -.5 16 16"><path d="M1 5H14V13H1ZM5 5V2H10V5M1 8H14M3 9h0M5 9h0M7 9h0M9 9h0M11 9h0"/></svg></b>
<b><svg class="i" viewBox="-.5 -.5 16 16"><path d="M1 2H14V5H1ZM2 5V13H13V5M6 8H9V10H6Z"/></svg></b>
<b><svg class="i" viewBox="-.5 -.5 16 16"><path d="M1 2H14V11H1ZM3 4H12V9H3ZM4 14H11M7 11V14M8 11V14"/></svg></b>
<b><svg class="i" viewBox="-.5 -.5 16 16"><path class="f" d="M1 5H14V10H11V14H4V10H1ZM4 1H11V4H4Z"/><path class="d" d="M5 9H10V13H5ZM6 2H8"/></svg></b>
<b><svg class="i" viewBox="-.5 -.5 16 16"><path d="M1 3H14V13H1ZM4 1H7V3M6 6H9L10 8L9 10H6L5 8Z"/></svg></b>
<b><svg class="i" viewBox="-.5 -.5 16 16"><path d="M1 3H14V13H1ZM3 1H11V3M6 6H9L11 8L9 11H6L4 8Z"/></svg></b>
<b><svg class="i" viewBox="-.5 -.5 16 16"><path d="M1 9L8 2L15 9M3 8V14H13V8M6 14V10H10V14"/></svg></b>
<b><svg class="i" viewBox="-.5 -.5 16 16"><path class="f" d="M3 4H6L8 6L10 4H13L15 6V8L8 14L1 8V6Z"/></svg></b>
<b><svg class="i" viewBox="-.5 -.5 16 16"><path class="f" d="M14 12V14H12Z"/></svg></b>
<b><svg class="i" viewBox="-.5 -.5 16 16"><path d="M3 10H5V13H3ZM7 6H9V13H7ZM11 2H13V13H11Z"/></svg></b>
<b><svg class="i" viewBox="-.5 -.5 16 16"><path class="f" d="M2 10H3V14H2ZM5 7H6V14H5ZM8 3H9V14H8ZM11 6H12V14H11Z"/></svg></b>
<b><svg class="i" viewBox="-.5 -.5 16 16"><path class="f" d="M2 3H13V6H2ZM2 9H13V12H2Z"/><path class="d" d="M10 4H12V5H10ZM7 10H12V11H7Z"/></svg></b>
<b><svg class="i" viewBox="-.5 -.5 16 16"><path d="M1 1H14V14H1ZM6 3H9V5H6ZM6 7H9V13H6Z"/></svg></b>

<b><svg class="i" viewBox="-.5 -.5 16 16"><path d="M1 14L14 1"/></svg></b>
<b><svg class="i" viewBox="-.5 -.5 16 16"><path class="f" d="M4 2H12V8H9V10H7V7H10V4H6V6H4ZM7 12H9V13H7Z"/></svg></b>
<b><svg class="i" viewBox="-.5 -.5 16 16"><path d="M3 1H13V14H3Z"/><path class="o" d="M4 2H12V13H4Z"/></svg></b>
<b><svg class="i" viewBox="-.5 -.5 16 16"><path d="M5 1H13V14H3V3ZM5 8L8 5L11 8V11H5ZM7 11V9H9V11"/></svg></b>
<b><svg class="i" viewBox="-.5 -.5 16 16"><path d="M2 2H10V10H2ZM6 6H14V14H6Z"/></svg></b>
<b><svg class="i" viewBox="-.5 -.5 16 16"><path d="M2 2H10V6M2 2V10H6M6 6H14V14H6Z"/></svg></b>
<b><svg class="i" viewBox="-.5 -.5 16 16"><path d="M1 3H14V13H1ZM1 5H14"/></svg></b>
<b><svg class="i" viewBox="-.5 -.5 16 16"><text x="3.5" y="6" font-size="6.8" textLength="8" lengthAdjust="spacingAndGlyphs" font-family="Liberation Sans">HI</text><text x="1" y="12.5" font-size="6.8" textLength="13" lengthAdjust="spacingAndGlyphs" font-family="Liberation Sans">DPI</text></svg></b>
<b></b><b></b><b></b><b></b><b></b><b></b><b></b><b></b>
<b></b><b></b><b></b><b></b><b></b><b></b><b></b><b></b><b></b><b></b><b></b><b></b><b></b><b></b><b></b><b></b>
<b></b><b></b><b></b><b></b><b></b><b></b><b></b><b></b><b></b><b></b><b></b><b></b><b></b><b></b><b></b><b></b>
<b></b><b></b><b></b><b></b><b></b><b></b><b></b><b></b><b></b><b></b><b></b><b></b><b></b><b></b><b></b><b></b>
</div>

<div style="left:452.7px;top:86.7px;width:322.6px;height:31px;background:#ffbc51;border:1.2px solid #eb7630"></div>
<div style="left:585.5px;top:85.5px;width:1.2px;height:34.5px;background:#eb7630"></div>

<div style="left:508.7px;top:136.3px;width:223.3px;height:12.4px;background:#024658;border:1.4px solid #2f7486"></div>
<div style="left:510.4px;top:139px;width:192.3px;height:7.3px;background:#ffbc51"></div>

<div style="left:452.7px;top:161px;width:317.3px;height:317px;background:#022a36"></div>

<svg style="position:absolute;left:0;top:0;width:794px;height:570px" viewBox="0 0 794 570">
<defs>
<clipPath id="c"><path d="M2 1H13V4H2ZM1 2H15V3H1ZM14 3H15V7H7V6H14ZM7 7H8V8H7ZM6 8H9V14H6ZM7 14H8V15H7Z"/></clipPath>
<path id="l" vector-effect="non-scaling-stroke" d="M0 0H16M0 1H16M0 2H16M0 3H16M0 4H16M0 5H16M0 6H16M0 7H16M0 8H16M0 9H16M0 10H16M0 11H16M0 12H16M0 13H16M0 14H16M0 15H16M0 16H16M0 0V16M1 0V16M2 0V16M3 0V16M4 0V16M5 0V16M6 0V16M7 0V16M8 0V16M9 0V16M10 0V16M11 0V16M12 0V16M13 0V16M14 0V16M15 0V16M16 0V16"/>
</defs>
<g transform="translate(473,181.3) scale(17.44,17.4)" style="stroke-linecap:butt">
<use href="#l" style="stroke:#4f8897;stroke-width:1.1px;fill:none"/>
<path d="M2 1H13V4H2ZM1 2H15V3H1ZM14 3H15V7H7V6H14ZM7 7H8V8H7ZM6 8H9V14H6ZM7 14H8V15H7Z" style="fill:#51bfd3;stroke:none"/>
<g clip-path="url(#c)"><use href="#l" style="stroke:#4aa6ba;stroke-width:1.1px;fill:none"/></g>
</g>
<rect x="595.1" y="424.8" width="17" height="17" style="fill:none;stroke:#e62a32;stroke-width:1.2"/>
</svg>

<div class="box" style="left:18.3px;top:495.7px;width:159px;height:31px"></div>
<div class="box" style="left:180px;top:495.7px;width:37px;height:31px"></div>
<div class="btn" style="left:229.3px;top:495.7px;width:186.4px;height:31px"><svg class="i" style="left:25.8px;top:2px" viewBox="-.5 -.5 16 16"><path d="M5 1H12V4M12 11V14H3V3ZM6 6H9M6 6V11H9M6 8H8M11 5L14 8L11 11"/></svg></div>
<div class="btn" style="left:545.7px;top:495.7px;width:124.3px;height:31px"><svg class="i" style="left:3px;top:2px" viewBox="-.5 -.5 16 16"><path d="M5 1H13V14H3V3ZM10 3H11V4H10ZM3 11L6 7L9 11L11 9L13 11"/></svg></div>
<div class="btn" style="left:676px;top:495.7px;width:99.3px;height:31px"><svg class="i" style="left:14.5px;top:2px" viewBox="-.5 -.5 16 16"><path d="M2 2H14V14H2ZM2 14L14 2"/></svg></div>

<div class="box" style="left:0;top:539.3px;width:435px;height:32px"></div>
<div class="box" style="left:434.5px;top:539.3px;width:360px;height:32px"></div>

<svg style="position:absolute;left:0;top:0;width:794px;height:570px;stroke:none" viewBox="0 0 794 570" font-family="Liberation Sans" font-size="13">
<g style="fill:#51bfd3;fill-opacity:.92">
<text x="19" y="77" textLength="162" lengthAdjust="spacingAndGlyphs">Choose rIcon for Edit:</text>
<text x="454" y="77" textLength="110" lengthAdjust="spacingAndGlyphs">rIcon Name ID:</text>
<text x="459" y="148" textLength="43" lengthAdjust="spacingAndGlyphs">ZOOM:</text>
<text x="738" y="148" textLength="22" lengthAdjust="spacingAndGlyphs">x14</text>
<text x="716" y="33.5" textLength="48" lengthAdjust="spacingAndGlyphs">ABOUT</text>
<text x="41" y="517" textLength="115" lengthAdjust="spacingAndGlyphs">rIcons File (.rgi)</text>
<text x="187" y="517" textLength="24" lengthAdjust="spacingAndGlyphs">1/3</text>
<text x="283" y="517" textLength="103" lengthAdjust="spacingAndGlyphs">Export rIcons</text>
<text x="577" y="517" textLength="86" lengthAdjust="spacingAndGlyphs">Save Image</text>
<text x="718" y="517" textLength="39" lengthAdjust="spacingAndGlyphs">Clear</text>
<text x="20" y="560" textLength="137" lengthAdjust="spacingAndGlyphs">TOTAL ICONS: 256</text>
<text x="454" y="560" textLength="241" lengthAdjust="spacingAndGlyphs">SELECTED: 25 - BRUSH_PAINTER</text>
</g>
<text x="460" y="108" textLength="123" lengthAdjust="spacingAndGlyphs" style="fill:#e07a3a">BRUSH_PAINTER</text>
</svg>

</body></html>
